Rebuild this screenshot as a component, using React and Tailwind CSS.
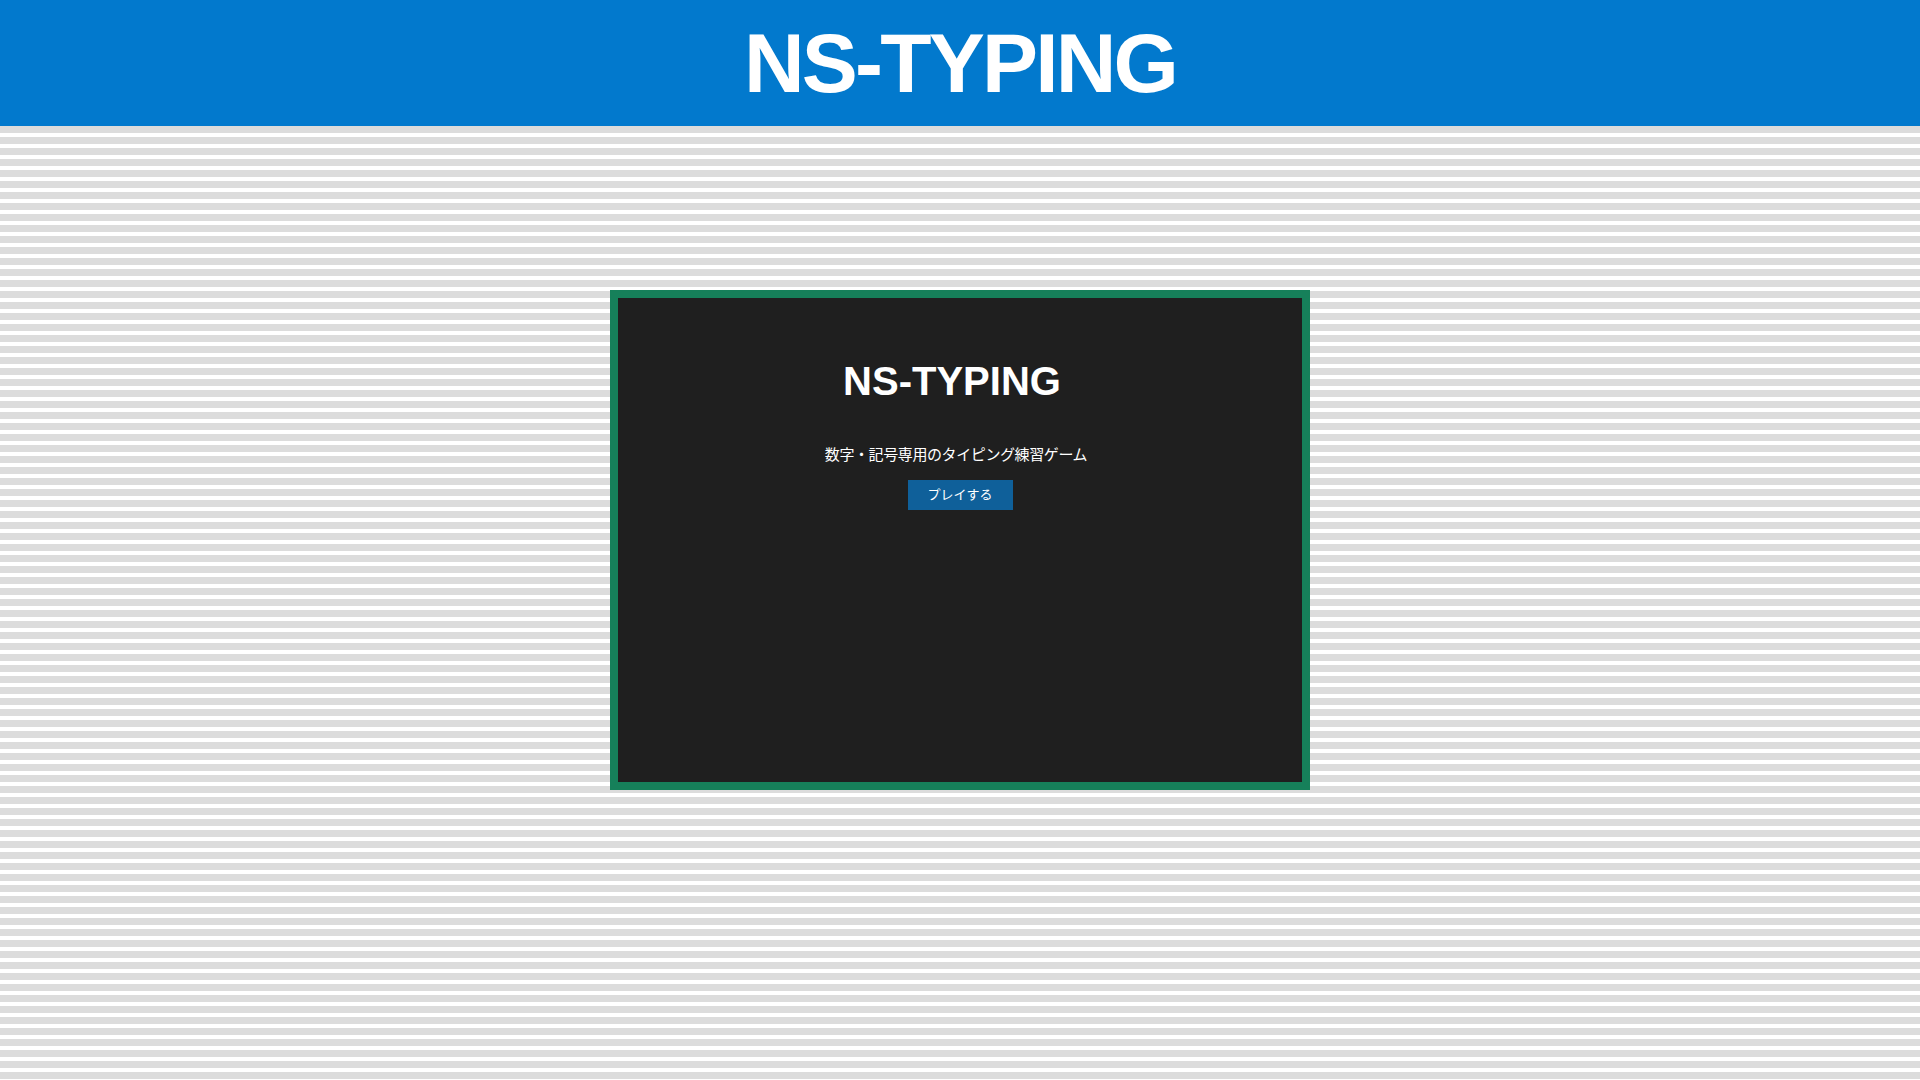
export default function App() {
  return (
    <div className="flex min-h-screen flex-col font-['Liberation_Sans','Noto_Sans_CJK_JP',sans-serif]">
      <header className="flex h-[126px] shrink-0 items-center justify-center bg-[#0279cd]">
        <h1 className="text-[84px] font-bold leading-none tracking-[-2.8px] text-white">NS-TYPING</h1>
      </header>

      <main className="flex flex-1 justify-center bg-[repeating-linear-gradient(#dcdcdc_0_7px,#ffffff_7px_11px)] pt-[164px]">
        <div className="h-[500px] w-[700px] border-[8px] border-[#16805a] bg-[#1f1f1f]">
          <div className="flex flex-col items-center pt-[60px] text-white">
            <h2 className="pr-4 text-[40px] font-bold leading-[46px]">NS-TYPING</h2>
            <p className="mt-[40px] pr-[8px] text-[15px] leading-[22px] tracking-[-0.4px]">数字・記号専用のタイピング練習ゲーム</p>
            <button className="mt-[14px] h-[30px] w-[105px] bg-[#0f609a] text-[13px] text-white">
              プレイする
            </button>
          </div>
        </div>
      </main>
    </div>
  );
}
